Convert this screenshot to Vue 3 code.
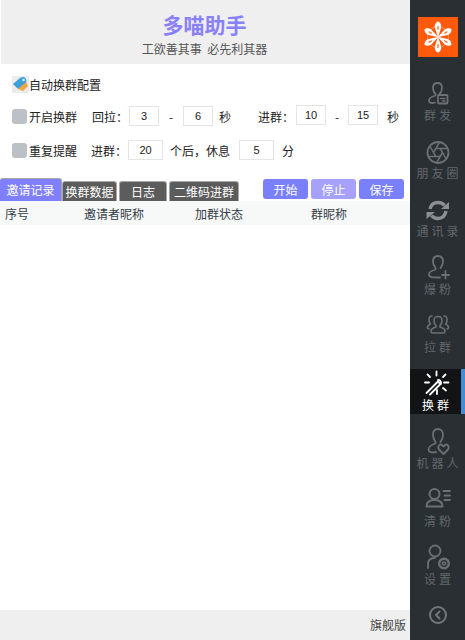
<template>
  <div class="app">
    <div class="main">
      <header class="head">
        <h1 class="title">多喵助手</h1>
        <p class="motto">工欲善其事&nbsp;&nbsp;必先利其器</p>
      </header>

      <section class="config">
        <div class="config-title">
          <svg class="tag" width="17" height="17" viewBox="0 0 17 17">
            <rect width="17" height="17" fill="#ececec" />
            <path d="M7 6 L13 3 L16 10 L11 15 L6 13 Z" fill="#f0a63c" />
            <path d="M1 8 L8 2 Q10 1 12 1 L14 3 Q15 6 13 7 L7 12 Q6 13 5 12 Z" fill="#3d9fdb" />
            <circle cx="11.5" cy="4" r="1.2" fill="#fff" />
          </svg>
          <span>自动换群配置</span>
        </div>

        <div class="row row-a">
          <i class="check"></i>
          <span class="lbl">开启换群</span>
          <span class="t1">回拉：</span>
          <input class="num" value="3" />
          <span class="dash">-</span>
          <input class="num" value="6" />
          <span class="unit">秒</span>
          <span class="t2">进群：</span>
          <input class="num up" value="10" />
          <span class="dash d2">-</span>
          <input class="num up" value="15" />
          <span class="unit u2">秒</span>
        </div>

        <div class="row row-b">
          <i class="check"></i>
          <span class="lbl">重复提醒</span>
          <span class="t3">进群：</span>
          <input class="num wide" value="20" />
          <span class="after">个后，休息</span>
          <input class="num wide" value="5" />
          <span class="unit u3">分</span>
        </div>
      </section>

      <div class="toolbar">
        <div class="tabs">
          <span v-for="(t, i) in tabs" :key="t.name" class="tab" :class="{ active: i === 0 }" :style="{ width: t.w + 'px' }">{{ t.name }}</span>
        </div>
        <div class="btns">
          <button class="btn">开始</button>
          <button class="btn stop">停止</button>
          <button class="btn">保存</button>
        </div>
      </div>

      <div class="thead">
        <span class="c1">序号</span>
        <span class="c2">邀请者昵称</span>
        <span class="c3">加群状态</span>
        <span>群昵称</span>
      </div>

      <div class="tbody"></div>

      <footer class="foot">旗舰版</footer>
    </div>

    <nav class="side">
      <div class="logo">
        <svg width="40" height="40" viewBox="0 0 40 40">
          <rect width="40" height="40" fill="#ff5a0c" />
          <circle cx="20" cy="20" r="10.5" fill="none" stroke="#ffa878" stroke-width="0.7" />
          <g fill="#fff">
            <path v-for="a in petals" :key="a" d="M20 20.5 L17 11 C16 8.5 18 5 20 4.5 C22 5 24 8.5 23 11 Z" :transform="`rotate(${a} 20 20)`" />
          </g>
          <g fill="#ff7a38">
            <ellipse v-for="a in petals" :key="a" cx="20" cy="11" rx="0.8" ry="2.2" :transform="`rotate(${a} 20 20)`" />
          </g>
        </svg>
      </div>

      <a v-for="item in nav" :key="item.id" class="nav-item" :class="{ on: item.id === 'swap' }">
        <svg class="ico" width="30" height="28" viewBox="0 0 30 28" fill="none" stroke="currentColor" stroke-width="1.8" stroke-linecap="round" stroke-linejoin="round">
          <template v-if="item.id === 'send'">
            <path d="M16.5 14 C18 12.5 19 10 19 8 C19 4.5 17 3 14.5 3 C12 3 10 4.5 10 8 C10 10.5 11 12.5 12.5 14 L12.5 15.5 C9 16.5 6 18 6 20.5 C6 23 9 23.5 12 22.5" />
            <rect x="15" y="15" width="9.5" height="8.5" rx="1" />
            <path d="M17.5 18.5 H22 M19.5 21 H22" stroke-width="1.3" />
          </template>
          <template v-else-if="item.id === 'moments'">
            <circle cx="15" cy="14.5" r="10.5" />
            <path :d="aperture" stroke-width="1.5" stroke-linecap="butt" />
          </template>
          <template v-else-if="item.id === 'contacts'">
            <g class="sync">
              <path d="M7 13 C8 8.5 11 6.5 15 6.5 C18 6.5 20 7.5 21.5 9.5" stroke-width="3.4" stroke-linecap="butt" />
              <path d="M26 13 L18 13 L26 6 Z" fill="currentColor" stroke="none" />
              <path d="M23 15 C22 20.5 19 22.5 15 22.5 C12 22.5 10 21.5 8.5 19.5" stroke-width="3.4" stroke-linecap="butt" />
              <path d="M3.5 16 L12 16 L3.5 23 Z" fill="currentColor" stroke="none" />
            </g>
          </template>
          <template v-else-if="item.id === 'fans'">
            <path d="M17.5 14 C19 12 20 10 20 7.5 C20 3.5 18 2 15 2 C12 2 10 3.5 10 7.5 C10 10 11 12 12.5 14 L12.5 15.5 C9 16.5 6 18.5 6 20.5 C6 23.5 9 23.5 17 23.5" />
            <path d="M22.5 17 V24.5 M19 21 H26" />
          </template>
          <template v-else-if="item.id === 'pull'">
            <path d="M13 13.5 C11.5 12 11 10.5 11 8.5 C11 6 12.8 4.5 15 4.5 C17.2 4.5 19 6 19 8.5 C19 10.5 18.5 12 17 13.5 V15 C20 16 22 17 22 19 C22 20.5 21 21 20 21 H10 C9 21 8 20.5 8 19 C8 17 10 16 13 15 Z" stroke-width="1.6" />
            <path d="M9 4 C7 4 6 5.5 6 8 C6 9.5 6.5 11 7.5 12 C5.5 13 4.5 14 4.5 15.5 C4.5 16.5 5 17 6 17 M21 4 C23 4 24 5.5 24 8 C24 9.5 23.5 11 22.5 12 C24.5 13 25.5 14 25.5 15.5 C25.5 16.5 25 17 24 17" stroke-width="1.6" />
          </template>
          <template v-else-if="item.id === 'swap'">
            <path d="M5.5 23 L17 11.5 L19.5 14" />
            <path d="M9 24.5 L20 13.5 C20.5 11.5 19 10 17 10" />
            <path d="M15.5 1.5 V5.5 M6.5 4.5 L9 7 M24.5 4.5 L22 7 M4 12.5 H8 M23 12.5 H27.5 M25 20.5 L22 18 M16 20 V24" />
          </template>
          <template v-else-if="item.id === 'bot'">
            <path d="M17.5 14 C19 12 20 10 20 7 C20 3 18 1 15 1 C12 1 10 3 10 7 C10 10 11 12 12.5 14 L12.5 15.5 C9 16.5 5.5 19 5.5 21.5 C5.5 24 8.5 25 13 24" />
            <path d="M20.5 26 L16 21.5 C14 18.5 17 15.5 19 17 L20.5 18.5 L22 17 C24 15.5 27 18.5 25 21.5 Z" />
          </template>
          <template v-else-if="item.id === 'clean'">
            <circle cx="11.5" cy="8" r="5" stroke-width="2" />
            <path d="M3.5 20.5 C3.5 16 7 14 11.5 14 C16 14 19.5 16 19.5 20.5 Z" stroke-width="2" />
            <path d="M20.5 5 H27 M21.5 9.5 H27 M21.5 14 H27" />
          </template>
          <template v-else-if="item.id === 'set'">
            <circle cx="12" cy="7" r="5.5" />
            <path d="M5 24 V20 C5 16 8 14 12 14" />
            <circle cx="21" cy="19.5" r="4.8" stroke-dasharray="3 1.3" stroke-width="2.4" />
            <circle cx="21" cy="19.5" r="1.6" stroke-width="1.5" />
          </template>
        </svg>
        <span class="nav-label">{{ item.label }}</span>
        <i v-if="item.id === 'swap'" class="bar"></i>
      </a>

      <div class="back">
        <svg width="20" height="20" viewBox="0 0 20 20" fill="none" stroke="#72777b" stroke-width="2" stroke-linecap="round" stroke-linejoin="round">
          <circle cx="10" cy="10" r="8" />
          <path d="M11.5 6.5 L8 10 L11.5 13.5" />
        </svg>
      </div>
    </nav>
  </div>
</template>

<script setup>
const tabs = [
  { name: '邀请记录', w: 62 },
  { name: '换群数据', w: 55 },
  { name: '日志', w: 48 },
  { name: '二维码进群', w: 70 }
]

const petals = [0, 60, 120, 180, 240, 300]

// shutter blades: each hexagon edge runs on until it meets the rim
const aperture = petals.map((deg) => {
  const a = (deg * Math.PI) / 180
  const sx = 15 + 4.5 * Math.cos(a - Math.PI / 3)
  const sy = 14.5 + 4.5 * Math.sin(a - Math.PI / 3)
  const ex = 15 + 4.5 * Math.cos(a) + 7.5 * Math.cos(a + Math.PI / 3)
  const ey = 14.5 + 4.5 * Math.sin(a) + 7.5 * Math.sin(a + Math.PI / 3)
  return `M${sx.toFixed(2)} ${sy.toFixed(2)} L${ex.toFixed(2)} ${ey.toFixed(2)}`
}).join(' ')

const nav = [
  { id: 'send', label: '群发' },
  { id: 'moments', label: '朋友圈' },
  { id: 'contacts', label: '通讯录' },
  { id: 'fans', label: '爆粉' },
  { id: 'pull', label: '拉群' },
  { id: 'swap', label: '换群' },
  { id: 'bot', label: '机器人' },
  { id: 'clean', label: '清粉' },
  { id: 'set', label: '设置' }
]
</script>

<style>
html, body { margin: 0; padding: 0; background: #fff; }
</style>

<style scoped>
.app {
  display: flex;
  width: 465px;
  height: 640px;
  overflow: hidden;
  font-family: "Noto Sans CJK SC", "Liberation Sans", sans-serif;
  font-size: 12px;
  color: #222;
}

.main { width: 410px; display: flex; flex-direction: column; }

.head {
  height: 64px;
  margin-left: 1px;
  background: #efefef;
  text-align: center;
  box-sizing: border-box;
  padding: 10px 2px 0 0;
}
.title { margin: 0; font-size: 21px; line-height: 28px; font-weight: 700; color: #8a80f8; }
.motto { margin: 2px 0 0; font-size: 12px; line-height: 18px; color: #555; }

.config { padding: 12px 0 0 12px; }
.config-title { display: flex; align-items: center; height: 17px; font-size: 12px; }
.tag { flex: none; }

.row { display: flex; align-items: center; height: 22px; }
.row-a { margin-top: 12px; }
.row-b { margin-top: 12px; }
.check { flex: none; width: 15px; height: 15px; border-radius: 3px; background: #bcc1c6; }
.lbl { width: 49px; margin-left: 2px; white-space: nowrap; }

.t1 { width: 37px; margin-left: 14px; white-space: nowrap; }
.t2 { width: 38px; margin-left: 27px; white-space: nowrap; }
.t3 { width: 37px; margin-left: 13px; white-space: nowrap; }

.num {
  box-sizing: border-box;
  width: 30px;
  height: 20px;
  padding: 0;
  border: 1px solid #e4e4e4;
  background: #fff;
  text-align: center;
  font: 11px "Liberation Sans", sans-serif;
  color: #222;
  outline: none;
}
.num.up { margin-top: -2px; }
.num.wide { width: 35px; }
.dash { width: 24px; text-align: center; }
.d2 { width: 22px; }
.unit { margin-left: 6px; width: 12px; }
.u2 { margin-left: 9px; }
.u3 { margin-left: 8px; }
.after { width: 60px; margin: 0 9px 0 7px; white-space: nowrap; }

.toolbar { display: flex; justify-content: space-between; height: 23px; margin-top: 17px; padding-right: 6px; }
.tabs { display: flex; align-items: flex-end; gap: 2px; }
.tab {
  box-sizing: border-box;
  height: 20px;
  border: 1px solid #a8a8a8;
  border-bottom: 0;
  border-radius: 3px 3px 0 0;
  background: #5c5c5c;
  color: #fff;
  text-align: center;
  line-height: 19px;
  font-size: 12px;
  white-space: nowrap;
}
.tab:first-child { margin-right: -2px; }
.tab.active { height: 23px; line-height: 22px; background: #7f7fff; border-left: 0; }

.btns { display: flex; gap: 3px; padding-top: 1px; }
.btn {
  width: 45px;
  height: 20px;
  padding: 0;
  border: 0;
  border-radius: 3px;
  background: #7a80fb;
  color: #fff;
  font: 12px "Noto Sans CJK SC", sans-serif;
}
.btn.stop { background: #a6a1fb; }

.thead {
  display: flex;
  height: 24px;
  align-items: center;
  padding-left: 5px;
  background: #f7f9f9;
  color: #333c46;
  font-size: 12px;
}
.c1 { width: 79px; }
.c2 { width: 111px; }
.c3 { width: 116px; }

.tbody { flex: 1; }

.foot {
  height: 30px;
  line-height: 30px;
  background: #efefef;
  text-align: right;
  padding-right: 4px;
  color: #444;
  font-size: 12px;
}

.side {
  width: 55px;
  background: #2a2f34;
  display: flex;
  flex-direction: column;
  align-items: stretch;
  gap: 13px;
  padding-top: 17px;
  box-sizing: border-box;
}
.logo { height: 40px; margin: 0 7px 9px 8px; }
.logo svg { display: block; }

.nav-item {
  position: relative;
  height: 45px;
  display: flex;
  flex-direction: column;
  align-items: center;
  color: #6c7074;
  box-sizing: border-box;
}
.ico { flex: none; margin-top: 1px; }
.sync { color: #8c9094; }
.nav-label {
  font-size: 12px;
  line-height: 14px;
  letter-spacing: 3px;
  margin-right: -3px;
  white-space: nowrap;
  color: #62676b;
}

.nav-item.on { background: #111314; color: #fff; margin-right: 4px; }
.nav-item.on .nav-label { color: #fff; }
.bar {
  position: absolute;
  top: 0;
  right: -4px;
  width: 4px;
  height: 45px;
  background: #3f8fd8;
}

.back { display: flex; justify-content: center; margin-top: 4px; }
</style>
